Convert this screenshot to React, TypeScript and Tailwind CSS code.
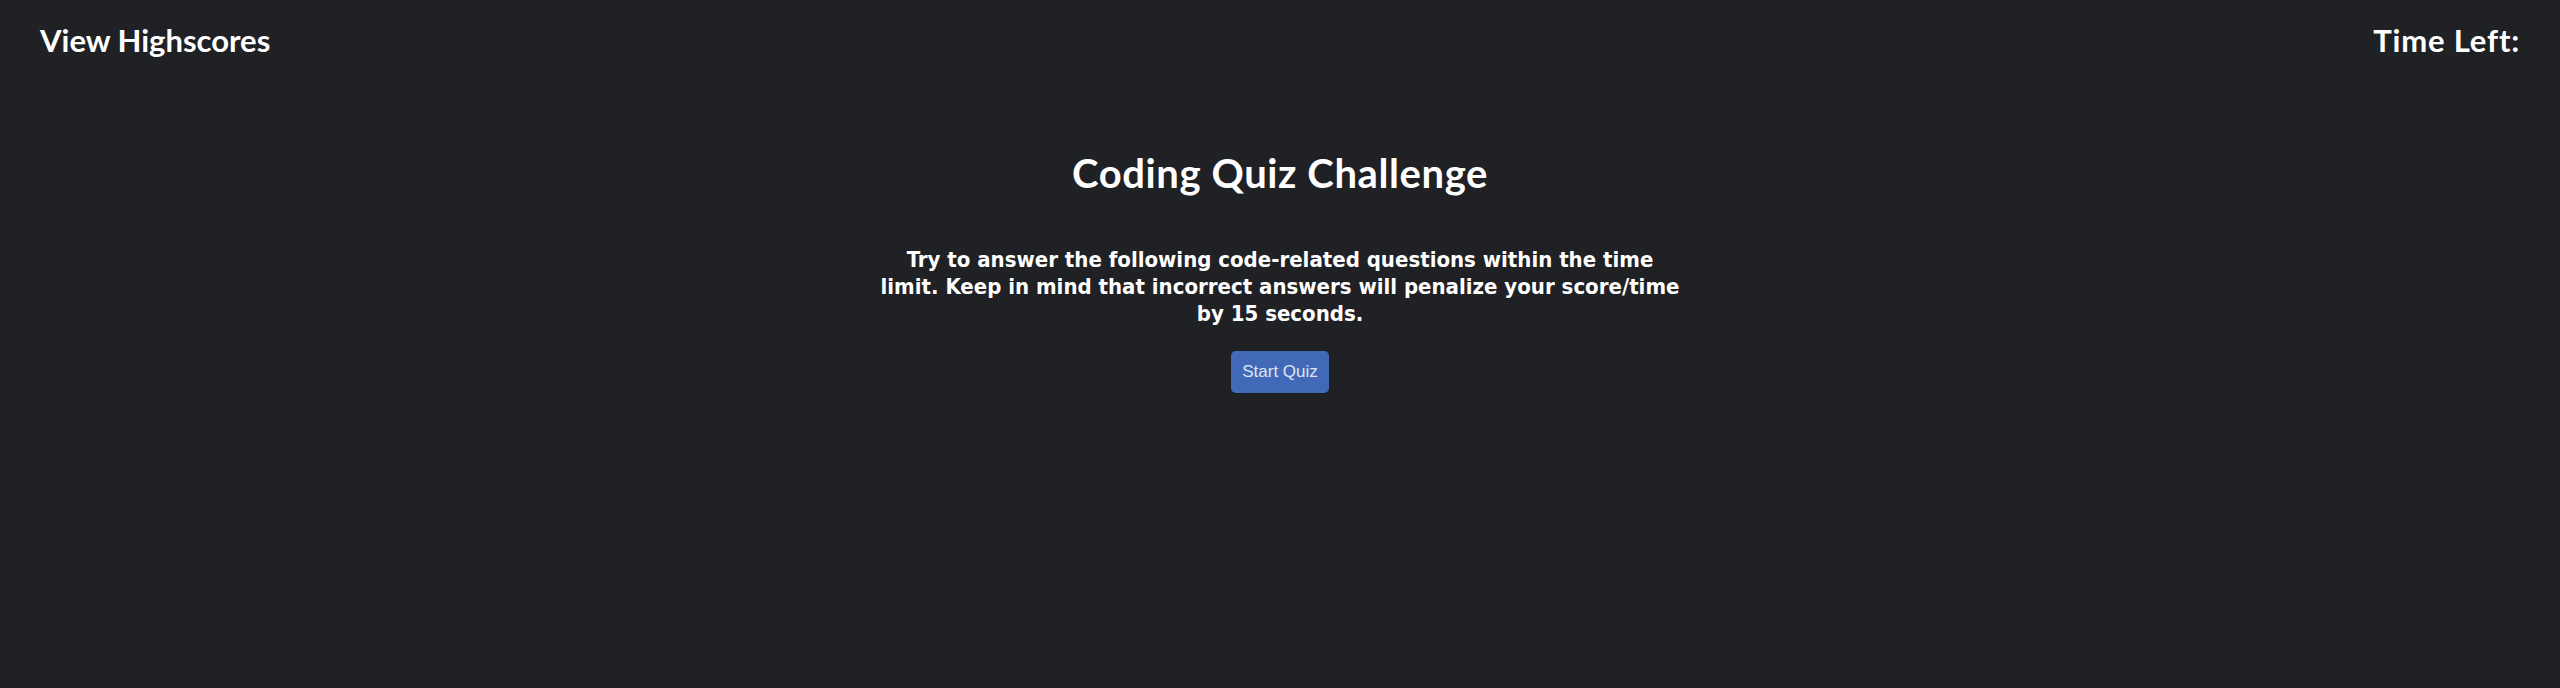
export default function App() {
  return (
    <div className="min-h-screen h-[688px] bg-[#202125] text-white font-['Lato','Noto_Sans',sans-serif]">
      <header className="flex justify-between px-[40px] pt-[21px]">
        <a className="text-[31px] font-bold leading-[38px] cursor-pointer">View Highscores</a>
        <span className="text-[31px] font-bold leading-[38px] tracking-[0.8px]">Time Left:</span>
      </header>
      <main className="flex flex-col items-center">
        <h1 className="mt-[90px] text-[40px] font-bold leading-[48px] tracking-[0.6px]">Coding Quiz Challenge</h1>
        <p className="mt-[49px] w-[800px] text-center text-[22px] font-bold leading-[27px] font-['DejaVu_Sans_Condensed','DejaVu_Sans',sans-serif]">
          Try to answer the following code-related questions within the time limit. Keep in mind that incorrect answers will penalize your score/time by 15 seconds.
        </p>
        <button className="mt-[24px] h-[42px] px-[11px] rounded-[5px] bg-[#4169b8] text-[17px] text-[#dfe5f2] font-['Liberation_Sans',Arial,sans-serif]">
          Start Quiz
        </button>
      </main>
    </div>
  );
}
